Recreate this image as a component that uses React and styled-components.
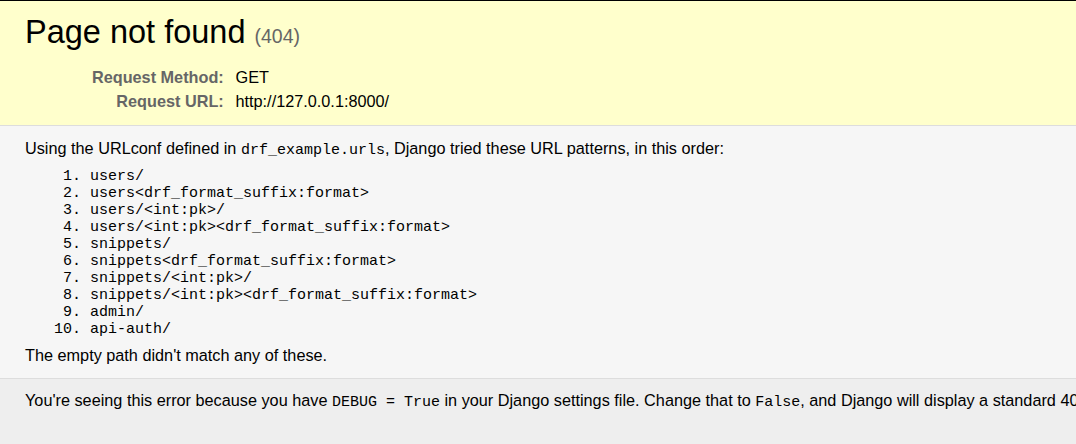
import React from "react";
import styled, { createGlobalStyle } from "styled-components";

const GlobalStyle = createGlobalStyle`
  html {
    overflow: hidden;
  }
  html, body {
    margin: 0;
    padding: 0;
  }
  body {
    min-width: 1320px;
    background: #eee;
    color: #000;
    border-top: 1px solid #000;
    font-family: "Liberation Sans", Arial, sans-serif;
    font-size: 16.25px;
  }
`;

const Section = styled.div`
  padding: ${(p) => p.$pad || "13px 25px"};
  background: ${(p) => p.$bg};
  border-bottom: ${(p) => (p.$last ? "none" : "1px solid #ddd")};
`;

const Title = styled.h1`
  margin: 0 0 14px;
  font-size: 32.5px;
  line-height: normal;
  font-weight: normal;
`;

const Status = styled.span`
  font-size: 60%;
  color: #666;
`;

const MetaTable = styled.table`
  width: 100%;
  border: none;
  border-collapse: collapse;
`;

const MetaLabel = styled.th`
  width: 195px;
  padding: 3px 8px 3px 3.75px;
  line-height: 18px;
  text-align: right;
  vertical-align: top;
  color: #666;
  font-weight: bold;
`;

const MetaValue = styled.td`
  padding: 3px 3.75px;
  line-height: 18px;
  vertical-align: top;
`;

const Paragraph = styled.p`
  margin: 0;
  white-space: nowrap;
`;

const Code = styled.code`
  font-family: "Liberation Mono", "Courier New", monospace;
  font-size: 15px;
`;

const PatternList = styled.ol`
  margin: 9px 0 8px 65px;
  padding: 0;
`;

const Pattern = styled.li`
  font-family: "Liberation Mono", "Courier New", monospace;
  font-size: 15px;
  line-height: 17px;
`;

const patterns = [
  "users/",
  "users<drf_format_suffix:format>",
  "users/<int:pk>/",
  "users/<int:pk><drf_format_suffix:format>",
  "snippets/",
  "snippets<drf_format_suffix:format>",
  "snippets/<int:pk>/",
  "snippets/<int:pk><drf_format_suffix:format>",
  "admin/",
  "api-auth/",
];

export default function App() {
  return (
    <>
      <GlobalStyle />
      <Section $bg="#ffc" $pad="13px 25px 12px">
        <Title>
          Page not found <Status>(404)</Status>
        </Title>
        <MetaTable>
          <tbody>
            <tr>
              <MetaLabel>Request Method:</MetaLabel>
              <MetaValue>GET</MetaValue>
            </tr>
            <tr>
              <MetaLabel>Request URL:</MetaLabel>
              <MetaValue>http://127.0.0.1:8000/</MetaValue>
            </tr>
          </tbody>
        </MetaTable>
      </Section>

      <Section $bg="#f6f6f6">
        <Paragraph>
          Using the URLconf defined in <Code>drf_example.urls</Code>, Django
          tried these URL patterns, in this order:
        </Paragraph>
        <PatternList>
          {patterns.map((p) => (
            <Pattern key={p}>{p}</Pattern>
          ))}
        </PatternList>
        <Paragraph>The empty path didn't match any of these.</Paragraph>
      </Section>

      <Section $bg="#eee" $pad="12px 25px" $last>
        <Paragraph>
          You're seeing this error because you have <Code>DEBUG = True</Code>{" "}
          in your Django settings file. Change that to <Code>False</Code>, and
          Django will display a standard 404 page.
        </Paragraph>
      </Section>
    </>
  );
}
